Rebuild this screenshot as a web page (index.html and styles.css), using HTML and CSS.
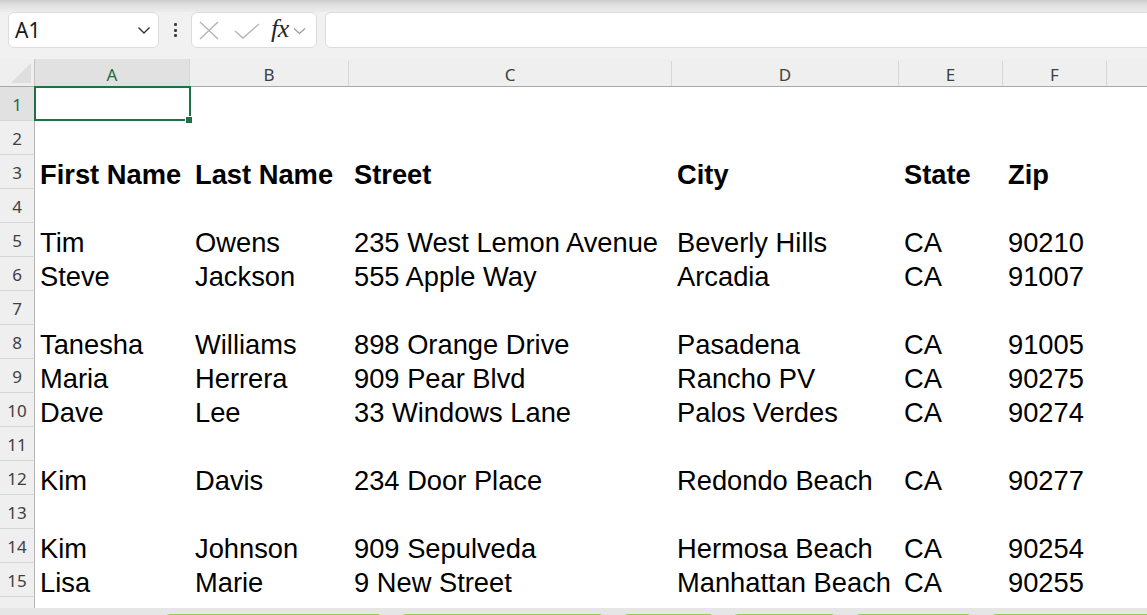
FILE: index.html
```html
<!DOCTYPE html>
<html>
<head>
<meta charset="utf-8">
<link rel="stylesheet" href="styles.css">
</head>
<body>
<div class="app">
  <div class="shade"></div>
  <div class="toolbar">
    <div class="namebox">
      <span class="cellref">A1</span>
      <svg class="nb-chev" width="14" height="9" viewBox="0 0 14 9"><path d="M1.5 1.5 L7 7 L12.5 1.5" fill="none" stroke="#333" stroke-width="1.4"/></svg>
    </div>
    <div class="dots"><i></i><i></i><i></i></div>
    <div class="fxgroup">
      <svg class="ic-x" width="20" height="19" viewBox="0 0 20 19"><path d="M1 1 L19 18 M19 1 L1 18" fill="none" stroke="#b4b4b4" stroke-width="1.4"/></svg>
      <svg class="ic-check" width="26" height="16" viewBox="0 0 26 16"><path d="M1 8 L9 15 L25 1" fill="none" stroke="#b4b4b4" stroke-width="1.4"/></svg>
      <span class="fx">fx</span>
      <svg class="ic-chev" width="13" height="8" viewBox="0 0 13 8"><path d="M1 1.5 L6.5 6.5 L12 1.5" fill="none" stroke="#9a9a9a" stroke-width="1.2"/></svg>
    </div>
    <div class="formula"></div>
  </div>

  <div class="sheet">
    <div class="row colhead">
      <div class="corner"><span class="tri"></span></div>
      <div class="ch sel">A</div>
      <div class="ch">B</div>
      <div class="ch">C</div>
      <div class="ch">D</div>
      <div class="ch">E</div>
      <div class="ch">F</div>
      <div class="ch last"></div>
    </div>

    <div class="row"><div class="rh sel">1</div><div class="c active"></div><div class="c"></div><div class="c"></div><div class="c"></div><div class="c"></div><div class="c"></div><div class="c"></div></div>
    <div class="row"><div class="rh">2</div><div class="c"></div><div class="c"></div><div class="c"></div><div class="c"></div><div class="c"></div><div class="c"></div><div class="c"></div></div>
    <div class="row bold"><div class="rh">3</div><div class="c">First Name</div><div class="c">Last Name</div><div class="c">Street</div><div class="c">City</div><div class="c">State</div><div class="c">Zip</div><div class="c"></div></div>
    <div class="row"><div class="rh">4</div><div class="c"></div><div class="c"></div><div class="c"></div><div class="c"></div><div class="c"></div><div class="c"></div><div class="c"></div></div>
    <div class="row"><div class="rh">5</div><div class="c">Tim</div><div class="c">Owens</div><div class="c">235 West Lemon Avenue</div><div class="c">Beverly Hills</div><div class="c">CA</div><div class="c">90210</div><div class="c"></div></div>
    <div class="row"><div class="rh">6</div><div class="c">Steve</div><div class="c">Jackson</div><div class="c">555 Apple Way</div><div class="c">Arcadia</div><div class="c">CA</div><div class="c">91007</div><div class="c"></div></div>
    <div class="row"><div class="rh">7</div><div class="c"></div><div class="c"></div><div class="c"></div><div class="c"></div><div class="c"></div><div class="c"></div><div class="c"></div></div>
    <div class="row"><div class="rh">8</div><div class="c">Tanesha</div><div class="c">Williams</div><div class="c">898 Orange Drive</div><div class="c">Pasadena</div><div class="c">CA</div><div class="c">91005</div><div class="c"></div></div>
    <div class="row"><div class="rh">9</div><div class="c">Maria</div><div class="c">Herrera</div><div class="c">909 Pear Blvd</div><div class="c">Rancho PV</div><div class="c">CA</div><div class="c">90275</div><div class="c"></div></div>
    <div class="row"><div class="rh">10</div><div class="c">Dave</div><div class="c">Lee</div><div class="c">33 Windows Lane</div><div class="c">Palos Verdes</div><div class="c">CA</div><div class="c">90274</div><div class="c"></div></div>
    <div class="row"><div class="rh">11</div><div class="c"></div><div class="c"></div><div class="c"></div><div class="c"></div><div class="c"></div><div class="c"></div><div class="c"></div></div>
    <div class="row"><div class="rh">12</div><div class="c">Kim</div><div class="c">Davis</div><div class="c">234 Door Place</div><div class="c">Redondo Beach</div><div class="c">CA</div><div class="c">90277</div><div class="c"></div></div>
    <div class="row"><div class="rh">13</div><div class="c"></div><div class="c"></div><div class="c"></div><div class="c"></div><div class="c"></div><div class="c"></div><div class="c"></div></div>
    <div class="row"><div class="rh">14</div><div class="c">Kim</div><div class="c">Johnson</div><div class="c">909 Sepulveda</div><div class="c">Hermosa Beach</div><div class="c">CA</div><div class="c">90254</div><div class="c"></div></div>
    <div class="row"><div class="rh">15</div><div class="c">Lisa</div><div class="c">Marie</div><div class="c">9 New Street</div><div class="c">Manhattan Beach</div><div class="c">CA</div><div class="c">90255</div><div class="c"></div></div>
    <div class="row"><div class="rh"></div><div class="c"></div><div class="c"></div><div class="c"></div><div class="c"></div><div class="c"></div><div class="c"></div><div class="c"></div></div>
  </div>

  <div class="tabbar">
    <div class="tab t1"></div>
    <div class="tab t2"></div>
    <div class="tab t3"></div>
    <div class="tab t4"></div>
    <div class="tab t5"></div>
    <div class="tab t6"></div>
  </div>
</div>
</body>
</html>
```

FILE: styles.css
```css
* { box-sizing: border-box; }
html, body { margin: 0; padding: 0; }
body {
  width: 1147px;
  height: 615px;
  overflow: hidden;
  background: #f1f1f1;
  font-family: "Liberation Sans", Arial, sans-serif;
}
.app {
  display: flex;
  flex-direction: column;
  height: 615px;
  overflow: hidden;
}
.shade {
  height: 12px;
  flex: none;
  background: linear-gradient(#cdcdcd, #e2e2e2 45%, #ececec);
}
.toolbar {
  height: 47px;
  flex: none;
  display: flex;
  align-items: flex-start;
  padding-left: 8px;
  background: #f1f1f1;
}
.namebox {
  width: 151px;
  height: 36px;
  background: #fff;
  border: 1px solid #dcdcdc;
  border-radius: 6px;
  display: flex;
  align-items: center;
  justify-content: space-between;
  padding: 0 7px 0 6px;
}
.cellref {
  font-family: "Noto Sans", "Open Sans", sans-serif;
  font-size: 21px;
  color: #1a1a1a;
  letter-spacing: 0.2px;
}
.nb-chev { margin-top: 1px; }
.dots {
  width: 32px;
  height: 36px;
  display: flex;
  flex-direction: column;
  align-items: center;
  justify-content: center;
  gap: 2.5px;
}
.dots i {
  display: block;
  width: 3px;
  height: 3px;
  border-radius: 1px;
  background: #404040;
}
.fxgroup {
  width: 126px;
  height: 36px;
  background: #fff;
  border: 1px solid #dcdcdc;
  border-radius: 6px;
  display: flex;
  align-items: center;
  padding-left: 7px;
}
.ic-x { margin-right: 15px; }
.ic-check { margin-right: 11px; margin-top: 1px; }
.fx {
  font-family: "Liberation Serif", "Times New Roman", serif;
  font-style: italic;
  font-size: 26px;
  color: #262626;
  margin-right: 4px;
  margin-top: -3px;
  letter-spacing: -0.5px;
}
.ic-chev { margin-top: 2px; }
.formula {
  flex: 1;
  height: 36px;
  margin-left: 8px;
  margin-right: -10px;
  background: #fff;
  border: 1px solid #dcdcdc;
  border-radius: 6px;
}

.sheet {
  height: 549px;
  flex: none;
  overflow: hidden;
  background: #fff;
}
.row {
  display: grid;
  grid-template-columns: 35px 155px 159px 323px 227px 104px 104px 1fr;
  height: 34px;
}
.colhead {
  height: 28px;
  background: #efefef;
  border-bottom: 1px solid #a8a8a8;
}
.corner {
  position: relative;
  border-right: 1px solid #c4c4c4;
  background: #efefef;
}
.tri {
  position: absolute;
  right: 3px;
  bottom: 3px;
  width: 0;
  height: 0;
  border-left: 20px solid transparent;
  border-bottom: 20px solid #dedede;
}
.ch {
  border-right: 1px solid #d6d6d6;
  margin-top: 2px;
  display: flex;
  align-items: center;
  justify-content: center;
  font-family: "Noto Sans", "Open Sans", sans-serif;
  font-size: 17px;
  color: #3f3f3f;
  padding-top: 1px;
}
.ch.sel {
  margin-top: 0;
  padding-top: 3px;
  background: #e1e1e1;
  color: #1e6b41;
}
.ch.last { border-right: none; }
.rh {
  background: #efefef;
  border-right: 1px solid #b4b4b4;
  border-bottom: 1px solid #d6d6d6;
  display: flex;
  align-items: center;
  justify-content: center;
  font-family: "Noto Sans", "Open Sans", sans-serif;
  font-size: 17px;
  color: #3f3f3f;
  padding-top: 2px;
}
.rh.sel {
  background: #e1e1e1;
  color: #1e6b41;
}
.c {
  display: flex;
  align-items: flex-end;
  padding-left: 5px;
  font-size: 27.3px;
  line-height: 28px;
  color: #000;
  white-space: nowrap;
  overflow: visible;
}
.bold .c { font-weight: bold; }
.c.active { position: relative; }
.c.active::before {
  content: "";
  position: absolute;
  left: -1px;
  top: -1px;
  right: -1px;
  bottom: 0;
  border: 2px solid #1e7145;
}
.c.active::after {
  content: "";
  position: absolute;
  right: -2px;
  bottom: -2px;
  width: 6px;
  height: 6px;
  background: #1e7145;
  border: 1px solid #fff;
  border-right: none;
  border-bottom: none;
}

.tabbar {
  flex: 1;
  background: #e6e6e6;
  display: flex;
  align-items: flex-start;
  padding-left: 165px;
  padding-top: 6px;
  gap: 19px;
}
.tab {
  height: 10px;
  border-top: 2px solid #8fd14f;
  border-radius: 5px 5px 0 0;
  background: #f4f4f4;
  flex: none;
}
.t1 { width: 217px; }
.t2 { width: 203px; }
.t3 { width: 91px; }
.t4 { width: 103px; }
.t5 { width: 117px; }
.t6 { width: 200px; }
```
